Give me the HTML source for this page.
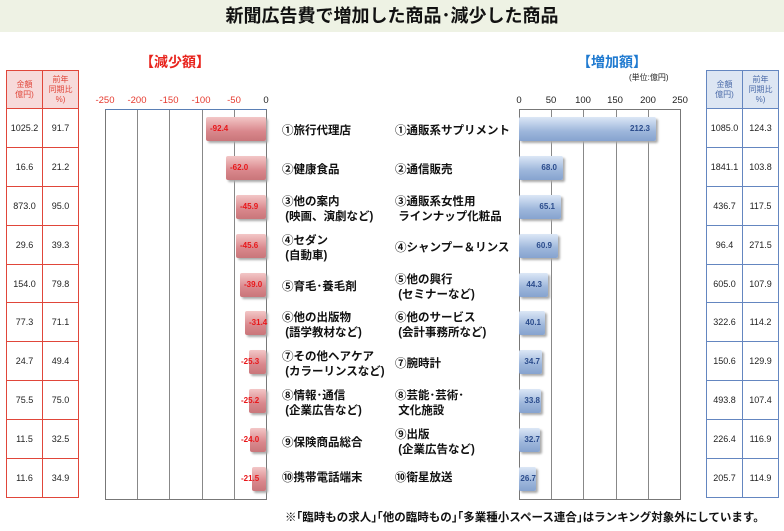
<!DOCTYPE html><html><head><meta charset="utf-8"><style>
*{margin:0;padding:0;box-sizing:border-box}
body{width:784px;height:531px;background:#fff;position:relative;overflow:hidden;font-family:"Liberation Sans","Noto Sans CJK JP",sans-serif}
.a{position:absolute}
.ban{left:0;top:0;width:784px;height:32px;background:#eef2e4;text-align:center;font-size:18px;font-weight:bold;line-height:32px;color:#111}
table{position:absolute;border-collapse:collapse;font-size:9px;text-align:center}
td{height:38.9px;color:#222}
.L td{border:1.5px solid #e0463a;width:36px}
.R td{border:1.5px solid #6486c0;width:36px}
.L tr:first-child td{background:#f7dada;color:#e0463a;font-size:8px;height:38px;line-height:1.25}
.R tr:first-child td{background:#dde6f3;color:#4a6aa8;font-size:8px;height:38px;line-height:1.25}
.ax{font-size:9.5px;color:#e53a2f;width:30px;text-align:center;top:95px}
.axr{font-size:9.5px;color:#222;width:30px;text-align:center;top:95px}
.g{width:1px;background:#888;top:110px;height:389px}
.bl{height:24px;background:linear-gradient(#f3c7c7,#d9878c 60%,#c9767a);border-radius:2px;box-shadow:2px 2px 2px #aaa;font-size:8px;font-weight:bold;color:#e8171a;line-height:24px;text-align:left;padding-left:4px;white-space:nowrap}
.br{height:24px;background:linear-gradient(#dce7f6,#9db6db 60%,#86a3cf);border-radius:2px;box-shadow:2px 2px 2px #aaa;font-size:8px;font-weight:bold;color:#2b4c8c;line-height:24px;text-align:right;padding-right:6px}
.lb{font-size:11.5px;font-weight:bold;color:#111;line-height:15px;white-space:nowrap}
</style></head><body>
<div class="a ban">新聞広告費で増加した商品･減少した商品</div>
<div class="a" style="left:140px;top:52px;font-size:14px;font-weight:bold;color:#e8231c">【減少額】</div>
<div class="a" style="left:577px;top:52px;font-size:14px;font-weight:bold;color:#1f7ad0">【増加額】</div>
<div class="a" style="left:629px;top:72px;font-size:8px;color:#222">(単位:億円)</div>

<table class="L" style="left:6px;top:70px"><tr><td>金額<br>億円)</td><td>前年<br>同期比<br>%)</td></tr>
<tr><td>1025.2</td><td>91.7</td></tr><tr><td>16.6</td><td>21.2</td></tr><tr><td>873.0</td><td>95.0</td></tr><tr><td>29.6</td><td>39.3</td></tr><tr><td>154.0</td><td>79.8</td></tr><tr><td>77.3</td><td>71.1</td></tr><tr><td>24.7</td><td>49.4</td></tr><tr><td>75.5</td><td>75.0</td></tr><tr><td>11.5</td><td>32.5</td></tr><tr><td>11.6</td><td>34.9</td></tr></table>
<table class="R" style="left:706px;top:70px"><tr><td>金額<br>億円)</td><td>前年<br>同期比<br>%)</td></tr>
<tr><td>1085.0</td><td>124.3</td></tr><tr><td>1841.1</td><td>103.8</td></tr><tr><td>436.7</td><td>117.5</td></tr><tr><td>96.4</td><td>271.5</td></tr><tr><td>605.0</td><td>107.9</td></tr><tr><td>322.6</td><td>114.2</td></tr><tr><td>150.6</td><td>129.9</td></tr><tr><td>493.8</td><td>107.4</td></tr><tr><td>226.4</td><td>116.9</td></tr><tr><td>205.7</td><td>114.9</td></tr></table>

<div class="a ax" style="left:90px">-250</div><div class="a ax" style="left:122px">-200</div><div class="a ax" style="left:154px">-150</div><div class="a ax" style="left:186px">-100</div><div class="a ax" style="left:219px">-50</div><div class="a ax" style="left:251px;color:#222">0</div>
<div class="a axr" style="left:504px">0</div><div class="a axr" style="left:536px">50</div><div class="a axr" style="left:568px">100</div><div class="a axr" style="left:600px">150</div><div class="a axr" style="left:633px">200</div><div class="a axr" style="left:665px">250</div>

<div class="a" style="left:105px;top:109px;width:162px;height:391px;border:1px solid #777;border-top:1px solid #5a7fb5"></div>
<div class="a g" style="left:137px"></div><div class="a g" style="left:169px"></div><div class="a g" style="left:202px"></div><div class="a g" style="left:234px"></div>
<div class="a" style="left:519px;top:109px;width:162px;height:391px;border:1px solid #777"></div>
<div class="a g" style="left:551px"></div><div class="a g" style="left:583px"></div><div class="a g" style="left:616px"></div><div class="a g" style="left:648px"></div>

<div class="a bl" style="left:206px;width:60px;top:117px">-92.4</div>
<div class="a bl" style="left:226px;width:40px;top:156px">-62.0</div>
<div class="a bl" style="left:236px;width:30px;top:195px">-45.9</div>
<div class="a bl" style="left:236px;width:30px;top:234px">-45.6</div>
<div class="a bl" style="left:240px;width:26px;top:273px">-39.0</div>
<div class="a bl" style="left:245px;width:21px;top:311px">-31.4</div>
<div class="a bl" style="left:249px;width:17px;top:350px;padding-left:0;text-indent:-8px">-25.3</div>
<div class="a bl" style="left:249px;width:17px;top:389px;padding-left:0;text-indent:-8px">-25.2</div>
<div class="a bl" style="left:250px;width:16px;top:428px;padding-left:0;text-indent:-9px">-24.0</div>
<div class="a bl" style="left:252px;width:14px;top:467px;padding-left:0;text-indent:-11px">-21.5</div>

<div class="a br" style="left:519px;width:137px;top:117px">212.3</div>
<div class="a br" style="left:519px;width:44px;top:156px">68.0</div>
<div class="a br" style="left:519px;width:42px;top:195px">65.1</div>
<div class="a br" style="left:519px;width:39px;top:234px">60.9</div>
<div class="a br" style="left:519px;width:29px;top:273px">44.3</div>
<div class="a br" style="left:519px;width:26px;top:311px;padding-right:4px">40.1</div>
<div class="a br" style="left:519px;width:23px;top:350px;padding-right:2px">34.7</div>
<div class="a br" style="left:519px;width:22px;top:389px;padding-right:1px">33.8</div>
<div class="a br" style="left:519px;width:21px;top:428px;padding-right:0">32.7</div>
<div class="a br" style="left:519px;width:17px;top:467px;padding-right:0">26.7</div>

<div class="a lb" style="left:282px;top:124px">①旅行代理店</div>
<div class="a lb" style="left:282px;top:163px">②健康食品</div>
<div class="a lb" style="left:282px;top:195px">③他の案内<br>&nbsp;(映画、演劇など)</div>
<div class="a lb" style="left:282px;top:234px">④セダン<br>&nbsp;(自動車)</div>
<div class="a lb" style="left:282px;top:280px">⑤育毛･養毛剤</div>
<div class="a lb" style="left:282px;top:311px">⑥他の出版物<br>&nbsp;(語学教材など)</div>
<div class="a lb" style="left:282px;top:350px">⑦その他ヘアケア<br>&nbsp;(カラーリンスなど)</div>
<div class="a lb" style="left:282px;top:389px">⑧情報･通信<br>&nbsp;(企業広告など)</div>
<div class="a lb" style="left:282px;top:436px">⑨保険商品総合</div>
<div class="a lb" style="left:282px;top:471px">⑩携帯電話端末</div>

<div class="a lb" style="left:395px;top:124px">①通販系サプリメント</div>
<div class="a lb" style="left:395px;top:163px">②通信販売</div>
<div class="a lb" style="left:395px;top:195px">③通販系女性用<br>&nbsp;ラインナップ化粧品</div>
<div class="a lb" style="left:395px;top:241px">④シャンプー＆リンス</div>
<div class="a lb" style="left:395px;top:273px">⑤他の興行<br>&nbsp;(セミナーなど)</div>
<div class="a lb" style="left:395px;top:311px">⑥他のサービス<br>&nbsp;(会計事務所など)</div>
<div class="a lb" style="left:395px;top:357px">⑦腕時計</div>
<div class="a lb" style="left:395px;top:389px">⑧芸能･芸術･<br>&nbsp;文化施設</div>
<div class="a lb" style="left:395px;top:428px">⑨出版<br>&nbsp;(企業広告など)</div>
<div class="a lb" style="left:395px;top:471px">⑩衛星放送</div>

<div class="a" style="left:285px;top:509px;font-size:11.5px;font-weight:bold;color:#111;white-space:nowrap">※｢臨時もの求人｣｢他の臨時もの｣｢多業種小スペース連合｣はランキング対象外にしています。</div>
</body></html>
